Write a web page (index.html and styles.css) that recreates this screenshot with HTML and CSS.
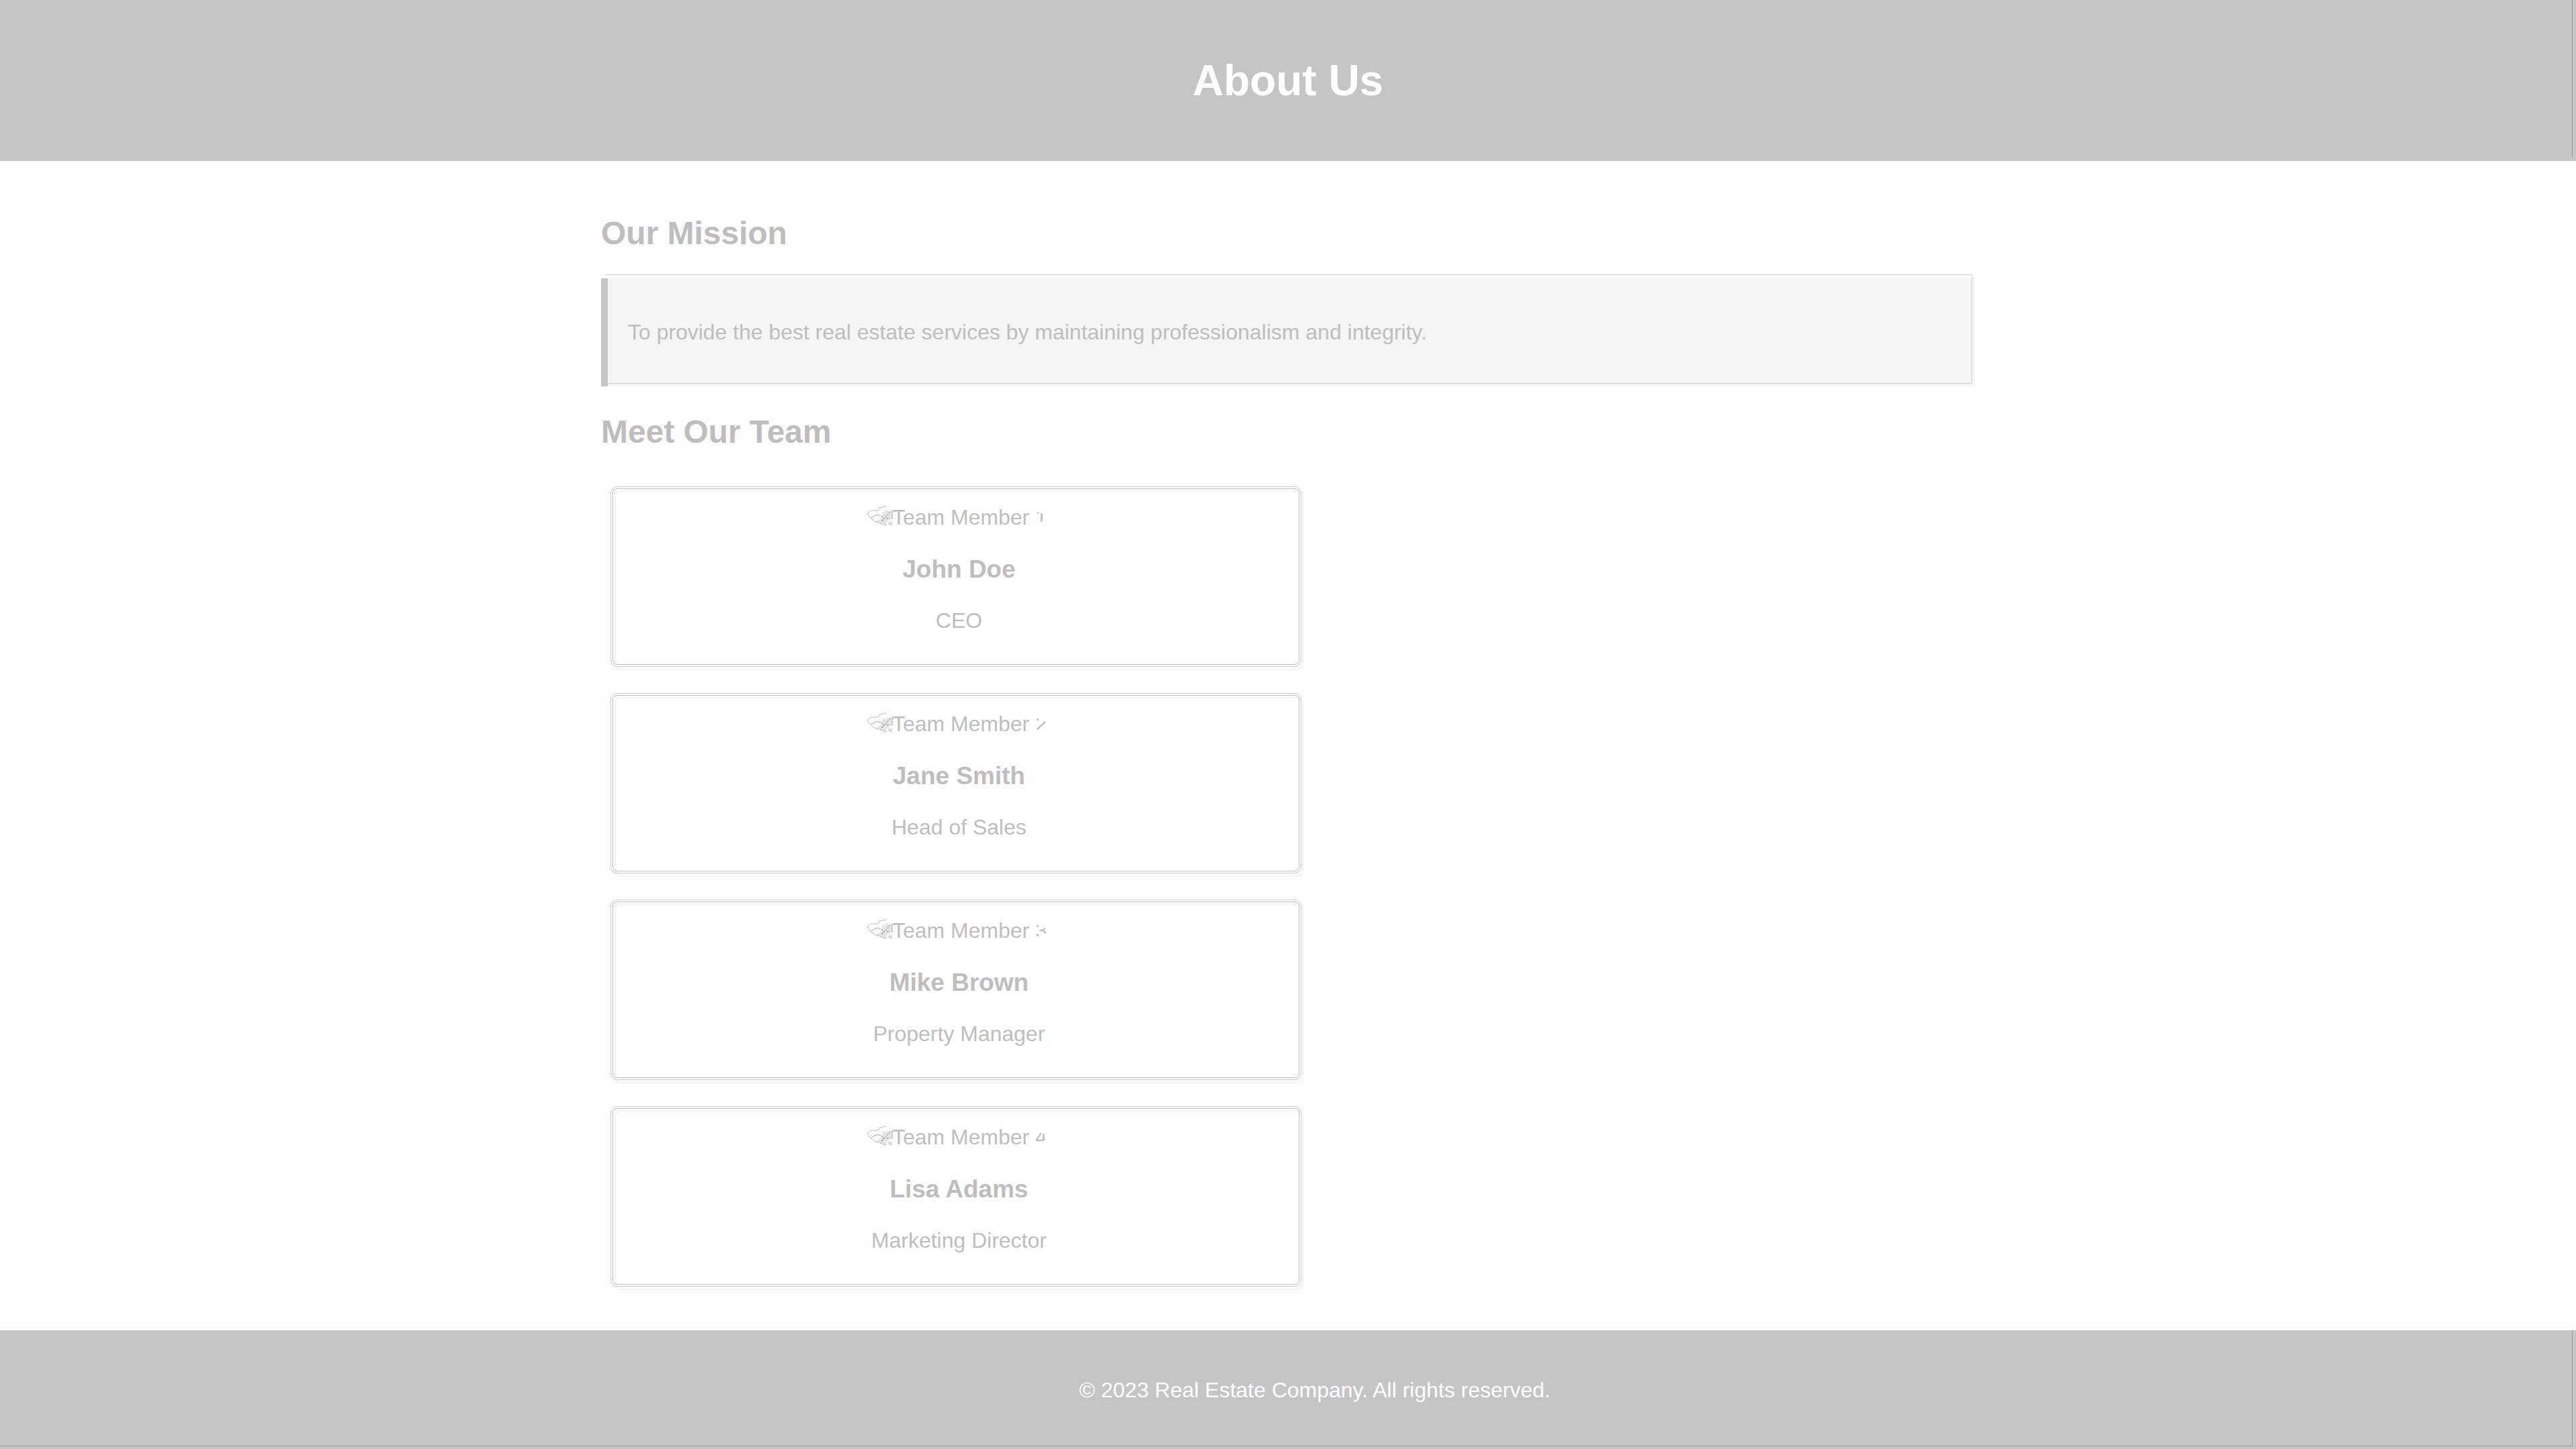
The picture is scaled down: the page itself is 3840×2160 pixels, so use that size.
FILE: index.html
```html
<!DOCTYPE html>
<html lang="en">
<head>
<meta charset="utf-8">
<title>About Us</title>
<link rel="stylesheet" href="styles.css">
</head>
<body>
<svg class="defs" width="0" height="0" aria-hidden="true">
  <symbol id="broken" viewBox="0 0 39 32">
    <path d="M23 11 38 9v12l-7 4-2 6-15-6 8-5z" fill="#e6e6e6"/>
    <path d="M32 26h6v6l-6-2z" fill="#dcdcdc"/>
    <path d="M29 3 19 5l-2 4H7l-6 4 3 6 8 6 17 6" fill="none" stroke="#a8a8a8" stroke-dasharray="3 1"/>
    <path d="M7 20q10-9 19 1l-3 4M22 25l13-14M29 21l5-1M38 10v11" fill="none" stroke="#8c8c8c" stroke-dasharray="3 1"/>
  </symbol>
</svg>
<header class="header"><h1>About Us</h1></header>
<main class="container">
  <h2>Our Mission</h2>
  <section class="mission"><p>To provide the best real estate services by maintaining professionalism and integrity.</p></section>
  <h2>Meet Our Team</h2>
  <section class="team">
    <article class="card">
      <div class="photo"><svg class="icon" aria-hidden="true"><use href="#broken"/></svg><span class="alt">Team Member 1</span></div>
      <h3>John Doe</h3>
      <p>CEO</p>
    </article>
    <article class="card">
      <div class="photo"><svg class="icon" aria-hidden="true"><use href="#broken"/></svg><span class="alt">Team Member 2</span></div>
      <h3>Jane Smith</h3>
      <p>Head of Sales</p>
    </article>
    <article class="card">
      <div class="photo"><svg class="icon" aria-hidden="true"><use href="#broken"/></svg><span class="alt">Team Member 3</span></div>
      <h3>Mike Brown</h3>
      <p>Property Manager</p>
    </article>
    <article class="card">
      <div class="photo"><svg class="icon" aria-hidden="true"><use href="#broken"/></svg><span class="alt">Team Member 4</span></div>
      <h3>Lisa Adams</h3>
      <p>Marketing Director</p>
    </article>
  </section>
</main>
<footer class="footer"><p>© 2023 Real Estate Company. All rights reserved.</p></footer>
</body>
</html>
```
FILE: styles.css
```css
* { box-sizing: border-box; }

body {
  margin: 0;
  background: #fdfdfd;
  color: #bebebe;
  font: 32px/37px "Liberation Sans", Arial, sans-serif;
}

h1, h2, h3, p { margin: 0; }

.defs { position: absolute; }

.header, .footer {
  position: relative;
  background: #c5c5c5;
  color: #fff;
  text-align: center;
}

.header { padding: 83px 40px; }

h1 { font-size: 64px; line-height: 74px; }

/* Hairline inside the right edge of the bars */
.header::after, .footer::after {
  content: "";
  position: absolute;
  inset: 0 5px 5px 0;
  border-right: 1px solid #999;
}

.footer::after { border-bottom: 1px solid #999; }

.container {
  max-width: 2048px;
  margin: 0 auto;
  padding: 40px 0;
}

h2 {
  padding: 40px 0;
  font-size: 48px;
  line-height: 55px;
}

.mission {
  position: relative;
  padding: 62px 30px;
  background: #f5f5f5;
  border-left: 10px solid #c5c5c5;
}

.mission::after {
  content: "";
  position: absolute;
  inset: -6px 4px 4px -4px;
  border: 1px solid #d2d2d2;
  border-left: 0;
  border-radius: 2px;
}

.team {
  display: grid;
  gap: 40px;
  padding: 20px;
}

.card {
  position: relative;
  width: 1027px;
  max-width: 100%;
  padding: 20px 20px 53px;
  background: #fff;
  border: 2px solid #f4f4f4;
  border-radius: 10px;
  text-align: center;
}

/* Two concentric hairlines around the card */
.card::before, .card::after {
  content: "";
  position: absolute;
  border: 1px solid;
}

.card::before {
  inset: -8px 1px 3px -8px;
  border-color: #cbcbcb;
  border-radius: 10px;
}

.card::after {
  inset: -5px 4px 6px -5px;
  border-color: #bdbdbd;
  border-radius: 7px;
}

.photo {
  position: relative;
  display: inline-block;
  vertical-align: top;
}

.alt {
  display: block;
  padding-left: 32px;
  border-radius: 50%;
  overflow: hidden;
}

.icon {
  position: absolute;
  left: -6px;
  top: -1px;
  width: 39px;
  height: 32px;
}

h3 {
  padding: 37px 0;
  font-size: 37px;
  line-height: 43px;
}

.footer { padding: 71px 0 70px 80px; }
```
